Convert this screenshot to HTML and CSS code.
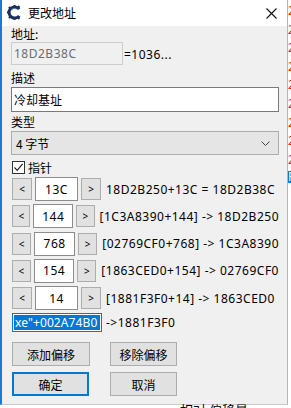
FILE: index.html
```html
<!DOCTYPE html>
<html lang="zh-CN">

<head>
    <meta charset="UTF-8">
    <meta name="viewport" content="width=device-width, initial-scale=1.0">
    <title>更改地址</title>
    <link rel="stylesheet" href="styles.css">
</head>

<body>
    <div class="desk">
        <!--JANELA DO DIÁLOGO-->
        <div class="janela">
            <div class="titulo">
                <svg class="icone" width="15" height="15" viewBox="0 0 15 15">
                    <path d="M12.2 4.2 A5.6 5.6 0 1 0 12.2 10.8" fill="none" stroke="#1c2f5e" stroke-width="3"/>
                    <g fill="#1c2f5e">
                        <rect x="6.5" y="0" width="2" height="2.4"/>
                        <rect x="6.5" y="12.6" width="2" height="2.4"/>
                        <rect x="0" y="6.5" width="2.4" height="2"/>
                        <rect x="1.6" y="1.6" width="2.2" height="2.2" transform="rotate(45 2.7 2.7)"/>
                        <rect x="1.6" y="11.2" width="2.2" height="2.2" transform="rotate(45 2.7 12.3)"/>
                        <rect x="10.6" y="0.8" width="2.2" height="2.2" transform="rotate(45 11.7 1.9)"/>
                        <rect x="10.6" y="12" width="2.2" height="2.2" transform="rotate(45 11.7 13.1)"/>
                    </g>
                    <path d="M4 5.5 A3.8 3.8 0 0 1 9.5 4" fill="none" stroke="#4f7bc4" stroke-width="1"/>
                </svg>
                <span class="titulo-texto">更改地址</span>
                <svg class="fechar" width="11" height="11" viewBox="0 0 11 11">
                    <path d="M0.5 0.5 L10.5 10.5 M10.5 0.5 L0.5 10.5" stroke="#111" stroke-width="1.1"/>
                </svg>
            </div>

            <div class="corpo">
                <div class="rotulo r-endereco">地址:</div>
                <div class="linha-endereco">
                    <div class="campo desativado">18D2B38C</div>
                    <span class="latino">=1036...</span>
                </div>

                <div class="rotulo r-descricao">描述</div>
                <div class="campo descricao">冷却基址</div>

                <div class="rotulo r-tipo">类型</div>
                <div class="seletor">
                    <span>4 字节</span>
                    <svg width="9" height="5" viewBox="0 0 9 5">
                        <path d="M0.5 0.5 L4.5 4.5 L8.5 0.5" fill="none" stroke="#444" stroke-width="1"/>
                    </svg>
                </div>

                <div class="marcador">
                    <span class="caixa-check">
                        <svg width="11" height="11" viewBox="0 0 11 11">
                            <path d="M1.5 5.5 L4.2 8.3 L9.6 1.8" fill="none" stroke="#222" stroke-width="1.2"/>
                        </svg>
                    </span>
                    <span>指针</span>
                </div>

                <!--LINHAS DE OFFSETS-->
                <div class="offsets">
                    <div class="offset">
                        <span class="seta">&lt;</span>
                        <span class="campo valor">13C</span>
                        <span class="seta">&gt;</span>
                        <span class="latino">18D2B250+13C = 18D2B38C</span>
                    </div>
                    <div class="offset">
                        <span class="seta">&lt;</span>
                        <span class="campo valor">144</span>
                        <span class="seta">&gt;</span>
                        <span class="latino">[1C3A8390+144] -&gt; 18D2B250</span>
                    </div>
                    <div class="offset">
                        <span class="seta">&lt;</span>
                        <span class="campo valor">768</span>
                        <span class="seta">&gt;</span>
                        <span class="latino">[02769CF0+768] -&gt; 1C3A8390</span>
                    </div>
                    <div class="offset">
                        <span class="seta">&lt;</span>
                        <span class="campo valor">154</span>
                        <span class="seta">&gt;</span>
                        <span class="latino">[1863CED0+154] -&gt; 02769CF0</span>
                    </div>
                    <div class="offset">
                        <span class="seta">&lt;</span>
                        <span class="campo valor">14</span>
                        <span class="seta">&gt;</span>
                        <span class="latino">[1881F3F0+14] -&gt; 1863CED0</span>
                    </div>
                </div>

                <div class="linha-base">
                    <div class="campo base"><span class="selecionado">xe"+002A74B0</span></div>
                    <span class="latino">-&gt;1881F3F0</span>
                </div>

                <div class="botoes b-offset">
                    <button class="botao largo">添加偏移</button>
                    <button class="botao">移除偏移</button>
                </div>
                <div class="botoes b-final">
                    <button class="botao largo padrao">确定</button>
                    <button class="botao">取消</button>
                </div>
            </div>
        </div>

        <!--FUNDO ATRÁS DA JANELA-->
        <div class="fundo">
            <span>2</span><span>2</span><span>2</span><span>2</span><span>2</span>
            <span>2</span><span>2</span><span>2</span><span>2</span><span class="azul">F</span>
        </div>
    </div>
    <div class="embaixo">相对 偏移量</div>
</body>

</html>
```

FILE: styles.css
```css
* {
    margin: 0;
    padding: 0;
    box-sizing: border-box;
}

body {
    width: 291px;
    height: 408px;
    overflow: hidden;
    background: #fff;
    font-family: "Noto Sans CJK SC", sans-serif;
    font-size: 12px;
    color: #000;
}

.desk {
    display: flex;
    align-items: flex-start;
}

.janela {
    width: 288px;
    height: 405px;
    flex-shrink: 0;
    background: #f0f0f0;
    border-left: 2px solid #1a7bd6;
    border-right: 1px solid #b5b5b5;
    border-bottom: 1px solid #c8c8c8;
    display: flex;
    flex-direction: column;
}

/* BARRA DE TÍTULO */
.titulo {
    height: 26px;
    background: #fff;
    display: flex;
    align-items: center;
    padding-left: 5px;
}

.icone {
    margin-top: -1px;
}

.titulo-texto {
    margin-left: 6px;
    line-height: 14px;
}

.fechar {
    margin-left: auto;
    margin-right: 10px;
}

.corpo {
    flex: 1;
    padding: 0 8px 0 9px;
    display: flex;
    flex-direction: column;
}

.rotulo {
    line-height: 14px;
    height: 14px;
}

.r-endereco {
    margin-top: 1px;
}

.r-descricao {
    margin-top: 6px;
}

.r-tipo {
    margin-top: 3px;
}

.latino {
    font-family: "Noto Sans", "Noto Sans CJK SC", sans-serif;
    letter-spacing: 0.5px;
    white-space: nowrap;
}

.campo {
    background: #fff;
    border: 1px solid #7a7a7a;
    display: flex;
    align-items: center;
    white-space: nowrap;
    overflow: hidden;
}

.linha-endereco {
    margin-top: 1px;
    display: flex;
    align-items: center;
    gap: 1px;
}

.desativado {
    width: 112px;
    height: 23px;
    background: #f0f0f0;
    border-color: #cccccc;
    color: #6d6d6d;
    padding-left: 2px;
    font-family: "Noto Sans", sans-serif;
    letter-spacing: 0.5px;
}

.linha-endereco .latino {
    margin-top: 2px;
}

.descricao {
    margin-top: 2px;
    height: 25px;
    padding-left: 2px;
}

.seletor {
    margin-top: 2px;
    height: 24px;
    background: #e5e5e5;
    border: 1px solid #adadad;
    display: flex;
    align-items: center;
    justify-content: space-between;
    padding: 0 8px 0 4px;
}

.marcador {
    margin-top: 4px;
    height: 16px;
    display: flex;
    align-items: center;
    gap: 3px;
    padding-left: 1px;
}

.caixa-check {
    width: 13px;
    height: 13px;
    border: 1px solid #333;
    background: #fff;
    display: flex;
    align-items: center;
    justify-content: center;
}

/* LINHAS DE OFFSET */
.offsets {
    margin-top: 2px;
    display: flex;
    flex-direction: column;
    gap: 3.25px;
}

.offset {
    height: 24px;
    display: flex;
    align-items: center;
    padding-left: 1px;
}

.seta {
    width: 20px;
    height: 22px;
    background: #e1e1e1;
    border: 1px solid #adadad;
    display: flex;
    align-items: center;
    justify-content: center;
    font-family: "Noto Sans", sans-serif;
    font-size: 10px;
}

.valor {
    width: 43px;
    height: 24px;
    margin: 0 3px;
    justify-content: center;
    font-family: "Noto Sans", sans-serif;
    letter-spacing: 0.5px;
    border-color: #8c8c8c;
}

.offset .latino {
    margin-left: 5px;
}

.linha-base {
    margin-top: 3px;
    display: flex;
    align-items: center;
    padding-left: 1px;
}

.base {
    width: 90px;
    height: 19px;
    border-color: #0078d7;
    padding: 1px;
}

.selecionado {
    flex: 1;
    height: 100%;
    background: #0078d7;
    color: #fff;
    font-family: "Noto Sans", sans-serif;
    letter-spacing: 0.1px;
    padding-left: 1px;
    line-height: 16px;
    overflow: hidden;
}

.linha-base .latino {
    margin-left: 4px;
}

/* BOTÕES */
.botoes {
    display: flex;
    gap: 20px;
    padding-left: 1px;
}

.b-offset {
    margin-top: 10px;
}

.b-final {
    margin-top: 6px;
}

.botao {
    width: 67px;
    height: 24px;
    background: #e1e1e1;
    border: 1px solid #adadad;
    font-family: "Noto Sans CJK SC", sans-serif;
    font-size: 12px;
    color: #000;
}

.largo {
    width: 78px;
}

.padrao {
    width: 77px;
    border: 2px solid #0078d7;
    margin-right: 1px;
}

/* O QUE APARECE ATRÁS DA JANELA */
.fundo {
    width: 3px;
    overflow: hidden;
    display: flex;
    flex-direction: column;
    padding-top: 2px;
    font-family: "Noto Sans", sans-serif;
    font-size: 12px;
    line-height: 18.6px;
    color: #e02020;
}

.fundo .azul {
    background: #0078d7;
    color: #fff;
    line-height: 12px;
    margin-top: 2px;
}

.embaixo {
    margin-left: 180px;
    line-height: 12px;
    margin-top: -1px;
    font-size: 13px;
}
```
